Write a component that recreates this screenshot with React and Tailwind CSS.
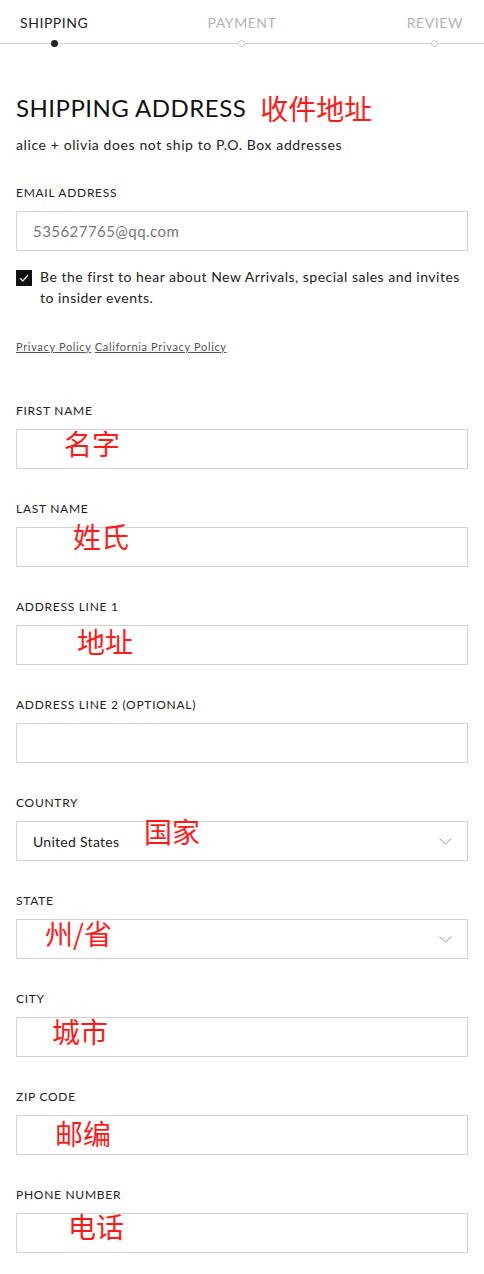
import React from "react";

const FONT = { fontFamily: '"Lato", "Noto Sans CJK SC", sans-serif' };
const CJK = { fontFamily: '"Noto Sans CJK SC", sans-serif' };

function Note({ children, className }) {
  return (
    <span
      style={CJK}
      className={"pointer-events-none absolute text-[28px] leading-none text-[#ff1a1a] " + className}
    >
      {children}
    </span>
  );
}

function Chevron() {
  return (
    <svg width="13" height="7" viewBox="0 0 13 7" className="absolute right-[15px] top-[16px]">
      <path d="M0.5 0.5 L6.5 6 L12.5 0.5" fill="none" stroke="#9a9a9a" strokeWidth="1" />
    </svg>
  );
}

function Field({ label, value, note, noteClass, select, muted }) {
  return (
    <div className="flex flex-col">
      <div className="text-[12px] leading-[16px] tracking-[0.06em] text-[#222] uppercase">{label}</div>
      <div className="relative mt-[10px] flex h-[40px] items-center border border-[#d3d3d3] px-[16px]">
        {value && (
          <span
            className={
              (muted ? "text-[15px] tracking-[0.03em] text-[#777]" : "text-[14px] tracking-[0.02em] text-[#222]")
            }
          >
            {value}
          </span>
        )}
        {select && <Chevron />}
        {note && <Note className={noteClass}>{note}</Note>}
      </div>
    </div>
  );
}

function Step({ label, active }) {
  return (
    <div className="flex flex-col items-center">
      <span
        className={
          "text-[14px] leading-[18px] tracking-[0.04em] " + (active ? "text-[#222]" : "text-[#b3b3b3]")
        }
      >
        {label}
      </span>
      <span
        className={
          "mt-[8px] -mb-[4px] block h-[7px] w-[7px] rounded-full " +
          (active ? "bg-[#222]" : "border border-[#c8c8c8] bg-white")
        }
      />
    </div>
  );
}

export default function App() {
  return (
    <div style={FONT} className="w-[484px] min-h-[1274px] bg-white">
      <div className="grid grid-cols-3 border-b border-[#d4d4d4] pt-[14px]">
        <div className="flex justify-start pl-[20px]">
          <Step label="SHIPPING" active />
        </div>
        <div className="flex justify-center">
          <Step label="PAYMENT" />
        </div>
        <div className="flex justify-end pr-[21px]">
          <Step label="REVIEW" />
        </div>
      </div>

      <div className="px-[16px]">
        <div className="mt-[48px] flex items-center">
          <h1 className="text-[24px] leading-[32px] tracking-[0.02em] text-[#111]">SHIPPING ADDRESS</h1>
          <span style={CJK} className="ml-[14px] text-[28px] leading-[32px] text-[#ff1a1a]">收件地址</span>
        </div>
        <p className="mt-[11px] text-[14px] leading-[20px] tracking-[0.043em] text-[#222]">
          alice + olivia does not ship to P.O. Box addresses
        </p>

        <div className="mt-[30px]">
          <Field label="Email Address" value="535627765@qq.com" muted />
        </div>

        <div className="mt-[15px] flex gap-[8px]">
          <div className="mt-[4px] flex h-[16px] w-[16px] shrink-0 items-center justify-center bg-[#111]">
            <svg width="10" height="8" viewBox="0 0 10 8">
              <path d="M1 4.2 L3.8 7 L9 1" fill="none" stroke="#d8d8d8" strokeWidth="1.4" />
            </svg>
          </div>
          <p className="text-[14px] leading-[21px] tracking-[0.035em] text-[#222]">
            Be the first to hear about New Arrivals, special sales and invites to insider events.
          </p>
        </div>

        <div className="mt-[31px] text-[11px] leading-[16px] tracking-[0.06em] text-[#555]">
          <span className="underline">Privacy Policy</span> <span className="underline">California Privacy Policy</span>
        </div>

        <div className="mt-[48px] flex flex-col gap-[32px] pb-[21px]">
          <Field label="First Name" note="名字" noteClass="left-[47px] top-[-1px]" />
          <Field label="Last Name" note="姓氏" noteClass="left-[56px] top-[-6px]" />
          <Field label="Address Line 1" note="地址" noteClass="left-[60px] top-[1px]" />
          <Field label="Address Line 2 (Optional)" />
          <Field label="Country" value="United States" select note="国家" noteClass="left-[127px] top-[-5px]" />
          <Field label="State" select note="州/省" noteClass="left-[28px] top-[-1px]" />
          <Field label="City" note="城市" noteClass="left-[35px] top-[-1px]" />
          <Field label="Zip Code" note="邮编" noteClass="left-[38px] top-[3px]" />
          <Field label="Phone Number" note="电话" noteClass="left-[51px] top-[-2px]" />
        </div>
      </div>
    </div>
  );
}
